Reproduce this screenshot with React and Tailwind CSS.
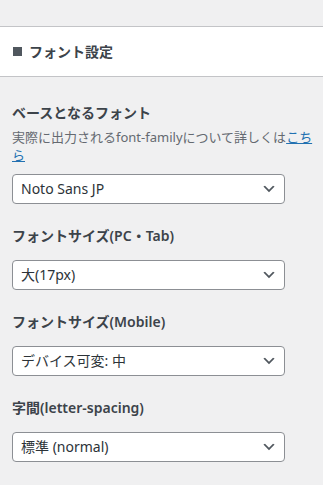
import React from "react";

function Chevron() {
  return (
    <svg width="16" height="16" viewBox="0 0 20 20" className="shrink-0">
      <path d="M5 6l5 5 5-5 2 1-7 7-7-7 2-1z" fill="#50575e" />
    </svg>
  );
}

function Select({ value }) {
  return (
    <div className="w-[273px] h-[30px] border border-[#8c8f94] rounded-[4px] bg-white flex items-center pl-[8px] pr-[7px] text-[14px] text-[#2c3338]">
      <span className="flex-1 leading-none">{value}</span>
      <Chevron />
    </div>
  );
}

function Label({ children, className = "" }) {
  return (
    <div className={"text-[14px] leading-[24px] font-semibold text-[#3c434a] " + className}>
      {children}
    </div>
  );
}

export default function App() {
  return (
    <div className="w-[323px] h-[485px] bg-[#f0f0f1] font-['Noto_Sans','Noto_Sans_CJK_JP',sans-serif] overflow-hidden">
      <div className="mt-[26px] h-[51px] border-y border-[#c3c4c7] bg-white flex items-center pl-[13px]">
        <span className="w-[9px] h-[9px] bg-[#50575e] inline-block" />
        <span className="ml-[7px] text-[14px] font-semibold text-[#3c434a]">フォント設定</span>
      </div>
      <div className="px-[12px] pt-[24px]">
        <Label>ベースとなるフォント</Label>
        <div className="mt-[3px] text-[13px] leading-[18px] text-[#646970] w-[305px]">
          <span className="whitespace-nowrap">
            実際に出力されるfont-familyについて詳しくは
            <span className="text-[#2271b1] underline">こち</span>
          </span>
          <br />
          <span className="text-[#2271b1] underline">ら</span>
        </div>
        <div className="mt-[10px]">
          <Select value="Noto Sans JP" />
        </div>
        <Label className="mt-[20px]">フォントサイズ(PC・Tab)</Label>
        <div className="mt-[12px]">
          <Select value="大(17px)" />
        </div>
        <Label className="mt-[20px]">フォントサイズ(Mobile)</Label>
        <div className="mt-[12px]">
          <Select value="デバイス可変: 中" />
        </div>
        <Label className="mt-[20px]">字間(letter-spacing)</Label>
        <div className="mt-[12px]">
          <Select value="標準 (normal)" />
        </div>
      </div>
    </div>
  );
}
